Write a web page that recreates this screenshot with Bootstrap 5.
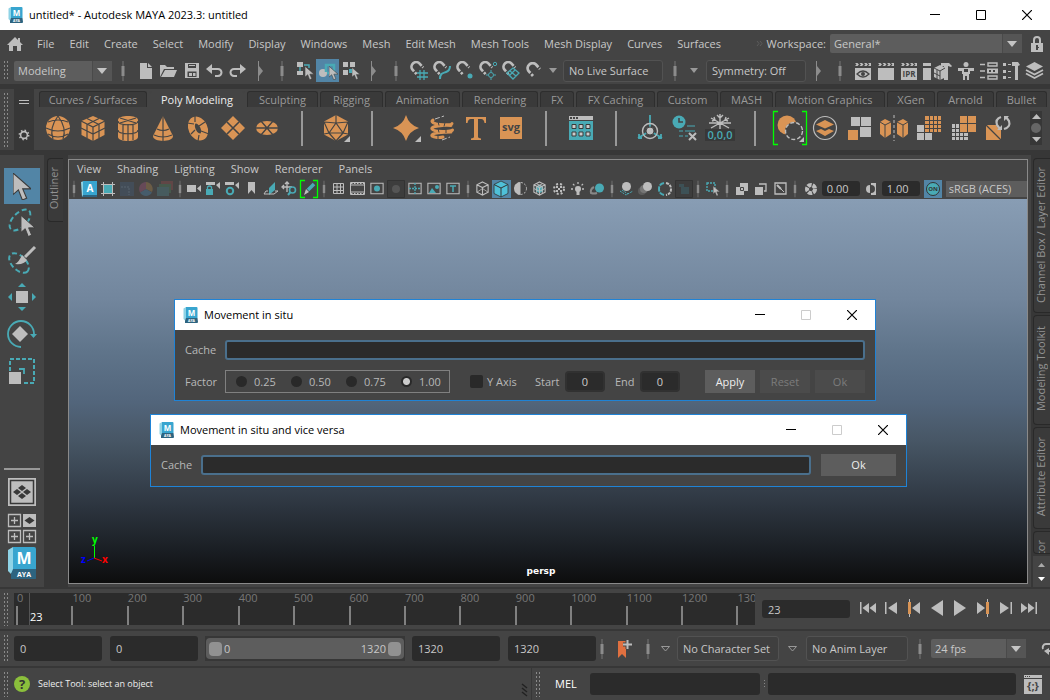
<!DOCTYPE html>
<html lang="en">
<head>
<meta charset="utf-8">
<meta name="viewport" content="width=device-width, initial-scale=1">
<title>untitled* - Autodesk MAYA 2023.3: untitled</title>
<link href="https://cdn.jsdelivr.net/npm/bootstrap@5.3.0/dist/css/bootstrap.min.css" rel="stylesheet">
<style>
:root{--panel:#444;--edge:#373737;--field:#2b2b2b;--txt:#c8c8c8;--sel:#5285a6;--ctl:#5d5d5d}
body{font-family:"Open Sans","Noto Sans",sans-serif;font-size:11px;line-height:16px;color:var(--txt);background:var(--panel)}
a{color:inherit;text-decoration:none}
button{background:none;border:0;padding:0;color:inherit;font:inherit;line-height:inherit}
input,select{font:inherit;color:inherit;border:0;min-width:0}
svg{display:block;flex:none;overflow:visible}
.fl{fill:#bdbdbd}.ft{fill:#49aab5}.fo{fill:#d99455}.fd{fill:#444}.fg{fill:#777}
.sl,.st,.so,.sd,.sg{fill:none;stroke:#bdbdbd}.st{stroke:#49aab5}.so{stroke:#d99455}.sd{stroke:#444}.sg{stroke:#888}
.wbar{height:30px;background:#fff;color:#000}
.ttl{margin-left:6px}
.wbtn{width:46px;height:30px;display:grid;place-items:center}
.wbtn:disabled{color:#ccc}
.menubar{height:27px;padding-left:7px}
.menubar nav{margin-left:-2px;gap:15px}
.lock{margin:0 2px 0 3px}
.tools{height:27px}
.grip{width:5px;margin:3px 6px 3px 3px;flex:none;background:radial-gradient(circle,#8a8a8a 0 .7px,transparent 1px) 0 0/3px 4px}
.ic{width:23px;height:23px;display:grid;place-items:center;flex:none}
.ic-h{width:22px}.ic-w{width:34px}.ic-s{width:16px}.ic-t{width:12px}.ic-l{width:27px}.ic-cut{width:9px}
.on{background:var(--sel)}
.drop{position:relative;background:var(--ctl);border-radius:2px;display:flex;flex:none;height:20px;width:98px}
.drop-ws{width:192px;height:19px}
.drop-fps{width:95px;height:19px}
.drop select{appearance:none;background:none;width:100%;padding:0 24px 0 4px;outline:0}
.drop::before{content:"";position:absolute;right:0;top:0;bottom:0;width:20px;background:#555;border-left:1px solid #4a4a4a}
.drop::after{content:"";position:absolute;right:5px;top:calc(50% - 3px);border:5px solid transparent;border-top:6px solid #c4c4c4;border-bottom:0;pointer-events:none}
.boxed{border:1px solid #525252;border-radius:3px;background:#3f3f3f;height:22px;width:100px;padding:0 5px;text-align:left;flex:none}
.boxed-l{height:25px;width:102px}
.live{margin-left:2px}
.shelf{border-top:5px solid var(--edge);height:71px;border-bottom:5px solid var(--edge)}
.shelf-side{width:20px;background:var(--edge);margin-right:5px;flex:none}
.gear{margin-top:26px}
.tabs{display:grid;gap:2px;grid-template-columns:108fr 96fr 71fr 63fr 75fr 76fr 34fr 79fr 61fr 53fr 110fr 48fr 57fr 51fr;margin-right:3px;padding-top:2px}
.tabs button{height:16px;background:#3a3a3a;border:1px solid #2e2e2e;border-bottom:0;border-radius:3px 3px 0 0;color:#999;line-height:15px;white-space:nowrap}
.tabs .cur{background:var(--panel);border-color:var(--panel);color:#eee}
.shelf-row{padding-left:2px}
.shelf-row>*{flex:1 1 0;display:grid;place-items:center;height:42px}
.shelf-scroll{width:12px;margin-left:14px;background:#373737;height:34px}
.toolbox{width:44px;padding-top:13px}
.toolbox .tl{width:36px;height:36px;margin-bottom:1px;display:grid;place-items:center}
.strip{width:24px;background:var(--edge);padding:3px 5px 0 3px}
.side{width:22px;padding:3px 0 0 5px;gap:2px;background:linear-gradient(90deg,#444 0 3px,#373737 3px)}
.side-nav{height:31px;gap:10px;background:var(--panel)}
.vtab{background:#3a3a3a;border:1px solid #292929;border-radius:4px 0 0 4px;border-right:0;color:#929292;overflow:hidden;width:100%;padding:8px 3px 0 0;display:flex;align-items:flex-start;justify-content:center;flex:none}
.vtab span{writing-mode:vertical-rl;transform:rotate(180deg);line-height:14px;white-space:nowrap}
.vt-64{height:64px}.vt-102{height:102px;padding-top:9px}.vt-110{height:110px;padding-top:10px}.vt-155{height:155px}
.vt-rest{flex:1 1 0;min-height:0}
.vp{border:1px solid #8a8a8a;margin-top:4px;margin-bottom:3px;min-width:0}
.pmenu{height:18px;padding-left:8px;gap:16px}
.ptools{height:21px}
.ptools .pi{flex:1 1 0;height:18px;display:grid;place-items:center}
.ptools .ps{width:10px;display:grid;place-items:center}
.pgap{width:22px;display:grid;place-items:center}
.num{background:var(--field);border-radius:3px;height:15px;width:38px;padding:0 5px}
.cm{width:18px;height:18px;display:grid;place-items:center}
.view-tf{appearance:none;background:var(--ctl);width:81px;height:16px;padding:0 3px}
.scene{background:linear-gradient(#889db4,#72869d 26%,#5f748a 40%,#52657b 53%,#475665 63%,#303944 78%,#191d22 92%,#0d0d0d)}
.cam{left:-7px;font-family:"DejaVu Sans",sans-serif}
.dlg{position:absolute;border:1px solid #1f83d6;background:var(--panel);color:#b8b8b8}
.dlg-a{left:105px;top:100px;width:702px}
.dlg-b{left:81px;top:215px;width:757px}
.dbody-a{padding:10px 10px 7px;gap:10px}
.dbody-b{padding:9px 10px 10px}
.cap{width:40px}.cap-s{width:30px}.cap-e{width:25px;margin-left:10px}
.cache{background:var(--field);border:2px solid #4a6f8c;border-radius:3px;height:20px;outline:0}
.radios{border:1px solid #808080;height:23px;padding-left:10px}
.radios label{width:55px;display:flex;align-items:center;gap:7px}
.radios label:last-child{width:48px}
.radios input,.tick{appearance:none;width:11px;height:11px;border-radius:50%;background:#292929;margin:0}
.radios input:checked{background:radial-gradient(circle,#ccc 0 3px,#292929 4px)}
.tick{width:13px;height:13px;border-radius:2px}
.yaxis{margin-left:20px;width:65px}
.spin{width:40px;height:21px;background:var(--field);border:2px solid #313131;border-radius:4px;text-align:center;color:#ccc}
.push{width:50px;height:23px;background:var(--ctl);color:#eee}
.push:disabled{background:#4b4b4b;color:#7c7c7c}
.push-l{width:75px;height:22px;margin-left:10px}
.g5{gap:5px}
.rule{height:2px;background:var(--edge)}
.row-time{height:40px}.row-range{height:35px}.row-status{height:32px}
.track{background:var(--field);height:32px;padding-left:2px;overflow-x:clip;overflow-y:visible;color:#777;position:relative}
.track span{flex:0 0 7.5%;padding-left:1px;line-height:15px;margin-top:-3px;background:linear-gradient(#808080,#808080) 0 16px/2px 19px no-repeat}
.now{position:absolute;left:15px;top:0;bottom:0;border-left:1px solid #555;color:#fff;padding-top:16px}
.val{background:var(--field);border-radius:3px;height:25px;width:88px;padding:0 6px;flex:none}
.val-now{height:18px;margin-left:7px}
.play{margin:0 10px 2px 6px}
.span-bar{width:200px;height:25px;background:var(--edge);padding:2px 1px;margin:0 7px;flex:none}
.span-bar>div{background:var(--ctl);border-radius:4px;height:21px;padding:0 3px;gap:2px}
.knob{width:13px;height:14px;background:#919191;border-radius:4px}
.mini{font-size:9px;color:#eee}
.help{flex:0 0 484px}
.vline{width:1px;background:var(--edge)}
.mel-cap{width:44px;padding-left:9px}
.mel{background:var(--field);height:22px;border-radius:3px;outline:0}
.mel-in{width:170px}
</style>
</head>
<body class="vh-100 d-flex flex-column overflow-hidden">
<svg width="0" height="0" class="position-absolute" aria-hidden="true"><defs>
<symbol id="maya" viewBox="0 0 28 32"><path d="M0 3 5 0V24L3 27 0 24Z" fill="#8fd3e6"/><path d="M5 0H26a2 2 0 0 1 2 2V22H5Z" fill="#38a5cf"/><path d="M5 22H28l1 8a2 2 0 0 1-2 2H3V27Z" fill="#2d6480"/><text x="16" y="17" text-anchor="middle" font-size="16" font-weight="700" fill="#fff">M</text><text x="16" y="30" text-anchor="middle" font-size="7" font-weight="700" fill="#fff">AYA</text></symbol>
<symbol id="sep" viewBox="0 0 6 22"><path class="fg" d="M2.500 1h1v20h-1z"/><path fill="#8c8c8c" d="M1.500 6h3v10h-3z"/></symbol>
<symbol id="han" viewBox="0 0 6 22"><path fill="#8c8c8c" d="M1 1h1v20H1zM2 6l4 5-4 5z"/></symbol>
<symbol id="dn" viewBox="0 0 8 5"><path d="M0 0h8L4 5z" fill="#999"/></symbol>
<symbol id="cur" viewBox="0 0 10 15"><path class="fl" stroke="#3a3a3a" stroke-width=".6" d="M0 0v12l3-2.600L5.200 15l2.400-1L5.400 8.800H10z"/></symbol>
<symbol id="mag" viewBox="0 0 18 18"><path class="sl" stroke-width="2.800" stroke-dasharray="2.500 1.500 20.500 1.500 3" d="M8 14 3.500 9A5 5 0 0 1 11 2.500L15 7"/></symbol>
<symbol id="clap" viewBox="0 0 18 18"><path class="fl" d="M1 6h16v12H1zM1 1l2.500 0 1.500 1.500-1.500 1.500H1l1.500-1.500zM5.500 1H8l1.500 1.500L8 4H5.500L7 2.500zM10 1h2.500L14 2.500 12.500 4H10l1.500-1.500zM14 1h3v3h-3l1.500-1.500z"/></symbol>
<symbol id="cube" viewBox="0 0 16 16"><path class="sl" stroke-width="1.200" d="M8 1 14 4V12L8 15 2 12V4ZM2 4l6 3 6-3M8 7v8"/></symbol>
<symbol id="frm" viewBox="0 0 16 14"><path class="sl" stroke-width="1.200" d="M1 1h14v12H1z"/></symbol>
<symbol id="wmin" viewBox="0 0 10 10"><path d="M0 4.500h10" stroke="currentColor"/></symbol>
<symbol id="wmax" viewBox="0 0 10 10"><path d="M.5.5h9v9h-9z" fill="none" stroke="currentColor"/></symbol>
<symbol id="wx" viewBox="0 0 10 10"><path d="M0 0l10 10M10 0 0 10" stroke="currentColor" stroke-width="1.200"/></symbol>
</defs></svg>

<header class="wbar d-flex align-items-center flex-shrink-0 ps-2">
  <svg width="15" height="16"><use href="#maya"/></svg><span class="ttl me-auto">untitled* - Autodesk MAYA 2023.3: untitled</span>
  <button class="wbtn" aria-label="Minimize"><svg width="10" height="10"><use href="#wmin"/></svg></button>
  <button class="wbtn" aria-label="Maximize"><svg width="10" height="10"><use href="#wmax"/></svg></button>
  <button class="wbtn" aria-label="Close"><svg width="10" height="10"><use href="#wx"/></svg></button>
</header>

<div class="menubar d-flex align-items-center flex-shrink-0">
  <svg width="16" height="14" viewBox="0 0 16 14" class="me-3"><path class="fl" d="M8 0 11 3V1h2v4l3 3h-2v6H10V9H6v5H2V8H0z"/></svg>
  <nav class="d-flex text-nowrap me-auto"><a href="#">File</a><a href="#">Edit</a><a href="#">Create</a><a href="#">Select</a><a href="#">Modify</a><a href="#">Display</a><a href="#">Windows</a><a href="#">Mesh</a><a href="#">Edit Mesh</a><a href="#">Mesh Tools</a><a href="#">Mesh Display</a><a href="#">Curves</a><a href="#">Surfaces</a></nav>
  <svg width="6" height="5" class="me-1"><path d="M0 0l2 2.500L0 5M3 0l2 2.500L3 5" fill="none" stroke="#5c5c5c"/></svg>
  <label for="ws" class="me-1">Workspace:</label>
  <div class="drop drop-ws"><select id="ws"><option>General*</option></select></div>
  <button class="ic lock" aria-label="Lock"><svg width="12" height="16" viewBox="0 0 12 16"><path class="sl" stroke-width="2" d="M3 7V4a3 3 0 0 1 6 0v3"/><path class="fl" d="M0 7h12v9H0z"/><path class="fd" d="M5 9h2v2h1v1H7v2H5z"/></svg></button>
</div>

<div class="tools d-flex align-items-center flex-shrink-0">
  <span class="grip align-self-stretch"></span>
  <div class="drop"><select aria-label="Menu set"><option>Modeling</option></select></div>
  <span class="ic ic-h"><svg width="6" height="22"><use href="#sep"/></svg></span>
  <button class="ic" aria-label="New scene"><svg width="12" height="16" viewBox="0 0 12 16"><path class="fl" d="M0 0h7v5h5v11H0zM8 0l4 4H8z"/></svg></button>
  <button class="ic" aria-label="Open"><svg width="17" height="14" viewBox="0 0 17 14"><path class="fl" d="M0 13V1h5l2 2h7v2H4zM5 6h12l-3 7H1z"/></svg></button>
  <button class="ic" aria-label="Save"><svg width="14" height="15" viewBox="0 0 14 15"><path class="fl" d="M0 0h14v15H0z"/><path class="fd" d="M3 1h8v4H3zM2.500 8.500h9V14h-9z"/><path class="fl" d="M4 2h6v1H4zM4 10h3v3H4zM8 10h2.500v3H8z"/></svg></button>
  <button class="ic" aria-label="Undo"><svg width="17" height="13" viewBox="0 0 17 13"><path class="sl" stroke-width="2" d="M3 5h9a3 3 0 0 1 0 7H9"/><path class="fl" d="M0 5l6-5v10z"/></svg></button>
  <button class="ic" aria-label="Redo"><svg width="17" height="13" viewBox="0 0 17 13"><path class="sl" stroke-width="2" d="M14 5H5a3 3 0 0 0 0 7h3"/><path class="fl" d="M17 5l-6-5v10z"/></svg></button>
  <span class="ic ic-h"><svg width="6" height="22"><use href="#han"/></svg></span>
  <span class="ic ic-h"><svg width="6" height="22"><use href="#sep"/></svg></span>
  <button class="ic" aria-label="Select by hierarchy"><svg width="18" height="18" viewBox="0 0 18 18"><path class="fl" d="M1 0h6v5H1zM1 9h6v4H1z"/><path class="st" stroke-width="1.500" d="M8 3h5v3M4 5v4"/><use href="#cur" x="9" y="4" width="9" height="14"/></svg></button>
  <button class="ic on" aria-label="Select by object"><svg width="20" height="18" viewBox="0 0 20 18"><circle class="fl" cx="5" cy="11" r="4"/><path class="st" stroke-width="2.500" d="M8 10V3h8v8H9"/><use href="#cur" x="11" y="4" width="9" height="14"/></svg></button>
  <button class="ic" aria-label="Select by component"><svg width="18" height="18" viewBox="0 0 18 18"><path class="fl" d="M1 0h5v5H1zM8 0h5v5H8zM1 8h5v5H1z"/><path class="ft" d="M7 7h5v4H7z"/><use href="#cur" x="10" y="5" width="8" height="13"/></svg></button>
  <span class="ic ic-h"><svg width="6" height="22"><use href="#han"/></svg></span>
  <span class="ic"><svg width="6" height="22"><use href="#sep"/></svg></span>
  <button class="ic" aria-label="Snap to grids"><svg width="18" height="18" viewBox="0 0 18 18"><use href="#mag" x="-1" y="-1" width="17" height="17"/><path class="st" stroke-width="1.300" d="M10 8v10M14 8v10M7 11h11M7 15h11"/></svg></button>
  <button class="ic" aria-label="Snap to curves"><svg width="18" height="18" viewBox="0 0 18 18"><use href="#mag" x="-1" y="-1" width="17" height="17"/><path class="st" stroke-width="2" d="M7 17c0-6 3-6 6-7 3-1 4-3 4-6"/></svg></button>
  <button class="ic" aria-label="Snap to points"><svg width="18" height="18" viewBox="0 0 18 18"><use href="#mag" x="-1" y="-1" width="17" height="17"/><circle class="ft" cx="14" cy="14" r="2.500"/></svg></button>
  <button class="ic" aria-label="Snap to center"><svg width="18" height="18" viewBox="0 0 18 18"><use href="#mag" x="-1" y="-1" width="17" height="17"/><circle class="st" cx="12" cy="13" r="2.500"/><circle class="st" cx="16" cy="2" r="1.700"/><path class="st" d="M12 8v2M12 16v2M7 13h2M15 13h2"/></svg></button>
  <button class="ic" aria-label="Snap to planes"><svg width="18" height="18" viewBox="0 0 18 18"><use href="#mag" x="-1" y="-1" width="17" height="17"/><path class="st" stroke-width="1.300" d="M11 6l6 5-6 6-6-6zM8 9l6 5M13 8l-6 6"/></svg></button>
  <button class="ic" aria-label="Make live"><svg width="18" height="18" viewBox="0 0 18 18"><use href="#mag" width="18" height="18"/></svg></button>
  <span class="ic ic-s"><svg width="8" height="5"><use href="#dn"/></svg></span>
  <button class="boxed live">No Live Surface</button>
  <span class="ic"><svg width="6" height="22"><use href="#sep"/></svg></span>
  <span class="ic ic-s me-1"><svg width="8" height="5"><use href="#dn"/></svg></span>
  <button class="boxed">Symmetry: Off</button>
  <span class="ic"><svg width="6" height="22"><use href="#han"/></svg></span>
  <span class="ic ic-h"><svg width="6" height="22"><use href="#sep"/></svg></span>
  <button class="ic" aria-label="Render view"><svg width="18" height="18"><use href="#clap"/><path fill="none" stroke="#444" stroke-width="1.300" d="M3 12q6-6 12 0-6 6-12 0z"/><circle class="fd" cx="9" cy="12" r="2"/></svg></button>
  <button class="ic" aria-label="Render"><svg width="18" height="18"><use href="#clap"/></svg></button>
  <button class="ic" aria-label="IPR render"><svg width="18" height="18"><use href="#clap"/><text x="9" y="15" text-anchor="middle" font-size="8" font-weight="700" class="fd">IPR</text></svg></button>
  <button class="ic ic-w" aria-label="Render setup"><svg width="29" height="18" viewBox="0 0 29 18"><path class="fl" d="M0 1h8v3H0zM0 6h8v12H0zM11 6l6-3 6 3v9l-6 3-6-3zM18 1h8l3 3-1 1-3-1v14h-4V4h-3z"/><path class="sd" d="M9.500 5v13M11 6l6 3 5-3M17 9v9M14 8v9M11 11l6 3"/></svg></button>
  <button class="ic" aria-label="Character controls"><svg width="16" height="18" viewBox="0 0 16 18"><circle class="fl" cx="8" cy="2.500" r="2.500"/><path class="fl" d="M0 6h16v3h-4v3h-1v6H9v-4H7v4H5v-6H4V9H0z"/><path class="fd" d="M6 7h4v3H6z"/></svg></button>
  <button class="ic" aria-label="Node editor"><svg width="18" height="18" viewBox="0 0 18 18"><path class="sl" stroke-width="1.400" d="M8 1h9v3H8zM8 14h9v3H8zM0 2.500h5M0 15.500h5M0 9h5"/><path class="fl" d="M7 6.500h11v5H7z"/><path class="fd" d="M9 8h2v2H9zM13 8h2v2h-2z"/></svg></button>
  <button class="ic" aria-label="Tool settings"><svg width="17" height="18" viewBox="0 0 17 18"><path class="fl" d="M0 1h3v3H0zM0 8h3v3H0zM0 14h3v3H0zM5 2h3v1H5zM5 9h3v1H5zM5 15h3v1H5zM9 0h6l2 3-2 1v14h-3V4H9z"/></svg></button>
  <button class="ic" aria-label="Channel layers"><svg width="17" height="17" viewBox="0 0 17 17"><path class="fl" d="M8.500 0 17 4.500 8.500 9 0 4.500z"/><path class="sl" stroke-width="1.800" d="M0 8l8.500 4.500L17 8M0 11.500 8.500 16 17 11.500"/></svg></button>
</div>

<section class="shelf d-flex flex-shrink-0">
  <span class="grip"></span>
  <div class="shelf-side d-flex flex-column align-items-center">
    <svg width="10" height="6" class="mt-2"><path class="fl" d="M0 3h10v1H0zM0 6h10v1H0z"/></svg>
    <svg width="12" height="12" class="gear" viewBox="0 0 12 12"><circle class="sl" stroke-width="1.600" cx="6" cy="6" r="3.400"/><circle class="sl" stroke-width="1.500" cx="6" cy="6" r="4.700" stroke-dasharray="1.500 2.190"/></svg>
  </div>
  <div class="flex-grow-1 d-flex flex-column">
    <div class="tabs"><button>Curves / Surfaces</button><button class="cur">Poly Modeling</button><button>Sculpting</button><button>Rigging</button><button>Animation</button><button>Rendering</button><button>FX</button><button>FX Caching</button><button>Custom</button><button>MASH</button><button>Motion Graphics</button><button>XGen</button><button>Arnold</button><button>Bullet</button></div>
    <div class="d-flex">
    <div class="shelf-row d-flex flex-grow-1">
      <button aria-label="Sphere"><svg width="24" height="24" viewBox="0 0 24 24"><circle class="fo" cx="12" cy="12" r="12"/><path class="sd" stroke-width="1.200" d="M2 6q10-4 20 0M0 12q12 6 24 0M2 18q10 6 20 0M12 0Q3 12 7 23M12 0q9 12 5 23"/></svg></button>
      <button aria-label="Cube"><svg width="24" height="25" viewBox="0 0 24 25"><path class="fo" d="M12 0 23.500 5V19L12 25 .5 19V5z"/><path class="sd" stroke-width="1.200" d="M0 5l12 6 12-6M12 11v14M6 8v14M18 8v14M0 12l12 6 12-6M6 2.500l12 6M18 2.500l-12 6"/></svg></button>
      <button aria-label="Cylinder"><svg width="20" height="25" viewBox="0 0 20 25"><path class="fo" d="M0 4C0-1.300 20-1.300 20 4V21C20 26.300 0 26.300 0 21z"/><path class="sd" stroke-width="1.200" d="M0 5c0 5 20 5 20 0M0 14c0 5 20 5 20 0M10 8v17M5 8v16M15 8v16M2 2l16 5M18 2 2 7"/></svg></button>
      <button aria-label="Cone"><svg width="20" height="25" viewBox="0 0 20 25"><path class="fo" d="M10 0 20 20C20 26.500 0 26.500 0 20z"/><path class="sd" stroke-width="1.200" d="M4 13q6 3 12 0M1 19q9 4 18 0M10 0v25"/></svg></button>
      <button aria-label="Torus"><svg width="22" height="25" viewBox="0 0 22 25"><ellipse class="so" stroke-width="7" cx="11" cy="12.500" rx="6" ry="9" transform="rotate(-25 11 12.500)"/><path class="sd" stroke-width="1.200" d="M0 7l7 1M8 0v6M18 6l-6 4M14 15l8 3M12 19l-1 6M4 18l4-4"/></svg></button>
      <button aria-label="Plane"><svg width="24" height="24" viewBox="0 0 24 24"><path class="fo" d="M12 0l12 12-12 12L0 12z"/><path class="sd" stroke-width="1.600" d="M6 6l12 12M18 6 6 18"/></svg></button>
      <button aria-label="Disc"><svg width="22" height="14" viewBox="0 0 22 14"><ellipse class="fo" cx="11" cy="7" rx="11" ry="7"/><path class="sd" stroke-width="1.400" d="M0 7h22M5 0l12 14M17 0 5 14"/></svg></button>
      <span><svg width="2" height="35"><path fill="#999" d="M0 0h2v35H0z"/></svg></span>
      <button aria-label="Platonic"><svg width="26" height="27" viewBox="0 0 26 27"><path class="fo" d="M12 0l12 6.500v13L12 26 0 19.500v-13z"/><path class="sd" stroke-width="1.200" d="M12 0v8M5 18l7-10 7 10zM0 7l12 1 12-1M0 7l5 11-5 1M24 7l-5 11 5 1M5 18l7 8 7-8"/><path class="fl" d="M26 21v6h-6z"/></svg></button>
      <span><svg width="2" height="35"><path fill="#999" d="M0 0h2v35H0z"/></svg></span>
      <button aria-label="Super shape"><svg width="28" height="27" viewBox="0 0 28 27"><path class="fo" d="M13 0q3 10 13 13-10 3-13 13Q10 16 0 13 10 10 13 0z"/><path class="fl" d="M28 21v6h-6z"/></svg></button>
      <button aria-label="Helix"><svg width="24" height="25" viewBox="0 0 24 25"><path class="so" stroke-width="3" stroke-linecap="round" d="M3 4C0 6 4 8 10 8.500s12 .5 12-1M21 9.500C14 9 0 10 2 13S21 16 22.500 14M21 16C14 16 0 17 2 20c2 1.500 8 2 11 1"/><path class="sl" stroke-dasharray="5 2" d="M5 3 14 0M12 24l8-3"/><path class="sd" d="M8 5.500l1 4M15 6.500l-1 4M8 12.500l1 4M16 13l0 4M8 19l0 4"/></svg></button>
      <button aria-label="Type"><svg width="20" height="23" viewBox="0 0 20 23"><path class="fo" d="M0 0h20v6h-1.500Q18 2 15 2H12V20q0 1 3 1.500V23H5v-1.500Q8 21 8 20V2H5Q2 2 1.500 6H0z"/></svg></button>
      <button aria-label="SVG"><svg width="22" height="22"><path class="fo" d="M0 0h22v22H0z"/><text x="11" y="14" text-anchor="middle" font-size="11" font-weight="700" class="fd">svg</text></svg></button>
      <span><svg width="2" height="35"><path fill="#999" d="M0 0h2v35H0z"/></svg></span>
      <button aria-label="Modeling toolkit"><svg width="24" height="24" viewBox="0 0 24 24"><path class="fl" d="M0 0h24v4H0z"/><path class="fd" d="M1 1h2v2H1zM4 1h2v2H4zM7 1h2v2H7z"/><path class="ft" d="M0 5h24v19H0z"/><path d="M3 8.500h4v4H3zM10 8.500h4v4h-4zM17 8.500h4v4h-4zM3 16h4v4H3zM10 16h4v4h-4zM17 16h4v4h-4z" fill="#ccc" stroke="#3a3a3a"/></svg></button>
      <span><svg width="2" height="35"><path fill="#999" d="M0 0h2v35H0z"/></svg></span>
      <button aria-label="Center pivot"><svg width="24" height="26" viewBox="0 0 24 26"><path class="st" stroke-width="1.800" d="M12 0v12M12 16l-12 7M12 16l12 7M1 19v4h3M23 19v4h-3"/><circle class="sl" stroke-width="1.400" cx="12" cy="16" r="7.500"/><circle class="fl" stroke="#444" cx="12" cy="16" r="4"/></svg></button>
      <button aria-label="Delete history"><svg width="26" height="26" viewBox="0 0 26 26"><circle class="ft" cx="7" cy="7" r="6.500"/><path class="sd" stroke-width="1.600" d="M7 3v4h4"/><path class="st" stroke-width="1.200" d="M15 11h8M7 16h4M13 16h10M7 21h4M13 21h3"/><path class="sl" stroke-width="2" d="M17 18l7 7M24 18l-7 7"/></svg></button>
      <button aria-label="Freeze transformations"><svg width="28" height="28" viewBox="0 0 28 28"><path class="sl" stroke-width="1.400" d="M14 0v16M5 4l18 10M23 4 5 14M3 9h22M11 1l3 3 3-3M6 7l3-1-1-3M22 7l-3-1 1-3"/><path fill="#383838" d="M-1 15h30v12H-1z"/><text x="14" y="25" text-anchor="middle" font-size="11" font-weight="600" class="ft">0,0,0</text></svg></button>
      <span><svg width="2" height="35"><path fill="#999" d="M0 0h2v35H0z"/></svg></span>
      <button aria-label="Combine"><svg width="34" height="34" viewBox="0 0 34 34"><path fill="none" stroke="#0f0" stroke-width="1.300" d="M5 .5H.5v33H5M29 .5h4.500v33H29"/><circle class="fo" cx="14" cy="14" r="9.500"/><circle class="fd" cx="21" cy="20" r="9"/><circle class="sl" stroke-width="1.400" stroke-dasharray="4 2" cx="21" cy="20" r="8.500"/><path class="fl" d="M31 26v5h-5z"/></svg></button>
      <button aria-label="Separate"><svg width="24" height="24" viewBox="0 0 24 24"><circle class="sl" stroke-width="1.200" cx="12" cy="12" r="11.500"/><path class="fo" d="M12 4l9 4.500-9 4-9-4zM3 15l5-2 4 2 4-2 5 2-9 5z"/></svg></button>
      <button aria-label="Extract"><svg width="23" height="23" viewBox="0 0 23 23"><path class="fl" d="M3 0h9v9H3zM13 0h10v9H13zM12 10h11v10H12z"/><path class="fo" d="M0 13h10v10H0z"/></svg></button>
      <button aria-label="Mirror"><svg width="28" height="26" viewBox="0 0 28 26"><path class="fo" d="M0 7l5-3 6 3v12l-6 4-5-4zM28 7l-5-3-6 3v12l6 4 5-4z"/><path class="sd" d="M0 7l5 3 6-3M5 10v13M28 7l-5 3-6-3M23 10v13"/><path class="sl" stroke-dasharray="3 2" d="M14 0v26"/></svg></button>
      <button aria-label="Smooth"><svg width="24" height="24" viewBox="0 0 24 24"><path class="fo" d="M8 0h16v16H8z"/><path class="sd" d="M12.500 0v16M16.500 0v16M20.500 0v16M8 4.500h16M8 8.500h16M8 12.500h16"/><path class="fl" d="M0 9h7v7H0zM0 17h7v7H0zM8 17h7v7H8z"/></svg></button>
      <button aria-label="Reduce"><svg width="24" height="24" viewBox="0 0 24 24"><path class="fo" d="M8 0h7v7H8zM16 0h8v7h-8zM8 8h7v8H8zM16 8h8v8h-8z"/><path class="fl" d="M0 8h7v9h9v7H0z"/><path class="sd" d="M3.500 8v16M7.500 8v16M11.500 16v8M0 12.500h8M0 16.500h16M0 20.500h16"/></svg></button>
      <button aria-label="Remesh"><svg width="25" height="24" viewBox="0 0 25 24"><path class="fo" d="M0 9h15v15H0z"/><path class="sd" stroke-width="1.300" d="M0 9l15 15"/><circle class="fd" cx="17" cy="7" r="7"/><path class="sl" stroke-width="2.200" d="M15 1q-6 2-4 8l3 4M18 13q7-2 5-8l-3-4"/><path class="fl" d="M11 14h5V9zM23 0h-5v5z"/></svg></button>
    </div>
    <div class="shelf-scroll d-flex flex-column align-items-center justify-content-center gap-1 my-1 me-2"><svg width="9" height="5"><path d="M0 5h9L4.500 0z" class="fl"/></svg><svg width="10" height="10"><circle cx="5" cy="5" r="5" fill="#666"/></svg><svg width="9" height="5"><path d="M0 0h9L4.500 5z" class="fl"/></svg></div>
    </div>
  </div>
</section>

<main class="d-flex flex-grow-1 overflow-hidden">
  <aside class="toolbox d-flex flex-column align-items-center flex-shrink-0">
    <button class="tl on" aria-label="Select tool"><svg width="18" height="27"><use href="#cur" width="18" height="27"/></svg></button>
    <button class="tl" aria-label="Lasso tool"><svg width="28" height="28" viewBox="0 0 28 28"><ellipse class="st" stroke-width="2" stroke-dasharray="5 3" cx="12" cy="11" rx="13" ry="7" transform="rotate(-45 12 11)"/><use href="#cur" x="13" y="6" width="14" height="22"/></svg></button>
    <button class="tl" aria-label="Paint selection"><svg width="28" height="28" viewBox="0 0 28 28"><ellipse class="st" stroke-width="2" stroke-dasharray="5 3" cx="11" cy="17" rx="12" ry="7" transform="rotate(45 11 17)"/><path class="sl" stroke-width="3" d="M27 1 17 11"/><path class="fl" d="M14 9l5 5q-3 5-12 4 4-2 7-9z"/></svg></button>
    <button class="tl" aria-label="Move tool"><svg width="28" height="28" viewBox="0 0 28 28"><path class="fl" d="M8 8h12v12H8z"/><path class="ft" d="M10 4h8l-4-4zM10 24h8l-4 4zM4 10v8l-4-4zM24 10v8l4-4z"/></svg></button>
    <button class="tl" aria-label="Rotate tool"><svg width="30" height="28" viewBox="0 0 30 28"><path class="st" stroke-width="1.800" d="M14 27A13 13 0 1 1 27 14"/><path class="ft" d="M23 14h7l-3.500 4z"/><path class="fl" d="M13 6l8 8-8 8-8-8z"/></svg></button>
    <button class="tl" aria-label="Scale tool"><svg width="26" height="26" viewBox="0 0 26 26"><path class="st" stroke-width="2" stroke-dasharray="4 2" d="M1 1h24v24H1z"/><path class="fd" d="M0 13h13v13H0z"/><path class="fl" d="M0 14h12v12H0z"/><path class="st" stroke-width="1.800" d="M10 11h5v5"/></svg></button>
    <svg width="36" height="2" class="mt-auto mb-2"><path fill="#999" d="M0 0h36v2H0z"/></svg>
    <button class="mb-2" aria-label="Single view"><svg width="28" height="28" viewBox="0 0 28 28"><path class="fl" d="M0 0h28v28H0z"/><path fill="none" stroke="#383838" stroke-width="1.500" d="M2.500 2.500h23v23h-23z"/><path fill="#383838" d="M14 7l4 3-4 3-4-3zM9 11l4 3-4 3-4-3zM19 11l4 3-4 3-4-3zM14 15l4 3-4 3-4-3z"/></svg></button>
    <button class="mb-1" aria-label="Four views"><svg width="28" height="29" viewBox="0 0 28 29"><path class="sl" stroke-width="1.300" d="M.5.5h12v12H.5zM.5 16.500h12v12H.5zM15.500 16.500h12v12h-12zM6.500 3v7M3 6.500h7M6.500 19v7M3 22.500h7M21.500 19v7M18 22.500h7"/><path class="fl" d="M15 0h13v13H15z"/><path fill="#383838" d="M21.500 3l5 3.500-5 3.500-5-3.500z"/></svg></button>
    <svg width="28" height="32" class="mb-2"><use href="#maya"/></svg>
  </aside>
  <div class="strip flex-shrink-0"><button class="vtab vt-64"><span>Outliner</span></button></div>
  <section class="vp flex-grow-1 d-flex flex-column">
    <nav class="pmenu d-flex align-items-center"><a href="#">View</a><a href="#">Shading</a><a href="#">Lighting</a><a href="#">Show</a><a href="#">Renderer</a><a href="#">Panels</a></nav>
    <div class="ptools d-flex align-items-center">
      <span class="ps"><svg width="6" height="18"><use href="#sep"/></svg></span>
      <button class="pi" aria-label="Arnold view"><svg width="16" height="16"><path fill="#8fd3e6" d="M0 1l3-1v16H1z"/><path fill="#38a5cf" d="M2 0h14v14H2z"/><path fill="#2d6480" d="M2 14h14v2H1z"/><text x="9" y="11" text-anchor="middle" font-size="10" font-weight="700" fill="#fff">A</text></svg></button>
      <button class="pi" aria-label="Frame region"><svg width="14" height="14" viewBox="0 0 14 14"><path class="ft" d="M3 3h8v8H3z"/><path class="sl" d="M2.500 0v14M11.500 0v14M0 2.500h14M0 11.500h14"/></svg></button>
      <button class="pi" aria-label="Crop region"><svg width="14" height="14"><path d="M0 0h14v14H0z" fill="#434d58"/><path d="M1 5h8v8" fill="none" stroke="#59646f" stroke-dasharray="2 1"/></svg></button>
      <button class="pi" aria-label="Colour"><svg width="14" height="14" viewBox="0 0 14 14" opacity=".35"><path d="M7 7V0a7 7 0 0 1 6 10z" fill="#b58a4a"/><path d="M7 7l6 3.500A7 7 0 0 1 1 10.500z" fill="#4a8ab5"/><path d="M7 7 1 10.500A7 7 0 0 1 7 0z" fill="#a5557f"/></svg></button>
      <button class="pi" aria-label="Snapshots"><svg width="16" height="15" viewBox="0 0 16 15" opacity=".4"><path d="M4 0h12v9H4z" fill="#8a4a4a"/><path d="M2 3h12v9H2z" fill="#4a7a5a"/><path d="M0 6h12v9H0z" fill="#4d7f87"/></svg></button>
      <span class="ps"><svg width="6" height="18"><use href="#sep"/></svg></span>
      <button class="pi" aria-label="Camera"><svg width="14" height="10"><path class="fl" d="M0 1h9v7H0zM10 4.500 14 1v7z"/></svg></button>
      <button class="pi" aria-label="Lock camera"><svg width="15" height="14"><path class="fl" d="M0 0h9v3H0zM10 3l4-3v7z"/><path class="ft" d="M0 7h7v6H0z"/><path class="st" stroke-width="1.300" d="M1.500 7V5q2-2 4 0v2"/></svg></button>
      <button class="pi" aria-label="Camera attributes"><svg width="15" height="14"><path class="fl" d="M0 0h9v3H0zM10 3l4-3v7z"/><circle class="st" stroke-width="2" cx="5" cy="9" r="3.200"/></svg></button>
      <button class="pi" aria-label="Bookmarks"><svg width="7" height="13"><path class="fl" d="M0 0h7v12L3.500 8 0 12z"/></svg></button>
      <button class="pi" aria-label="Image plane"><svg width="14" height="13"><path class="ft" d="M5 6l6-6v8l-6 5z"/><path class="sl" d="M4 9H2l-2 3h10l4-3h-3"/></svg></button>
      <button class="pi" aria-label="Pan and zoom"><svg width="15" height="14"><path class="sl" stroke-width="1.300" d="M5 1v9M1 5h9M3 2l2-2 2 2M2 3 0 5l2 2"/><circle class="st" stroke-width="1.600" cx="10.500" cy="8" r="3"/><path class="st" stroke-width="2" d="M8.500 10 6 13"/></svg></button>
      <button class="pi" aria-label="Grease pencil"><svg width="18" height="18"><path fill="none" stroke="#0f0" stroke-width="1.300" d="M5 .5H.5v17H5M13 .5h4.500v17H13"/><path class="st" stroke-width="3.500" d="M14 4 8 10"/><path class="fl" d="M6 9l3 3-5 3z"/></svg></button>
      <span class="ps"><svg width="6" height="18"><use href="#sep"/></svg></span>
      <button class="pi" aria-label="Grid"><svg width="11" height="11"><path class="sl" d="M.5.5h10v10H.5zM4 0v11M7.500 0v11M0 4h11M0 7.500h11"/></svg></button>
      <button class="pi" aria-label="Film gate"><svg width="15" height="13"><path class="sl" d="M.5.5h14v12H.5zM1 3h13M1 10h13" /><path class="sl" stroke-dasharray="1.500 1.500" d="M1 1.500h13M1 11.500h13"/></svg></button>
      <button class="pi" aria-label="Resolution gate"><svg width="14" height="13"><use href="#frm" width="14" height="13"/><circle class="ft" cx="7" cy="6.500" r="3"/></svg></button>
      <button class="pi" aria-label="Gate mask"><svg width="18" height="18"><path d="M.5.5h17v17H.5z" fill="#3d3d3d" stroke="#333"/><circle cx="9" cy="9" r="4" fill="#555"/></svg></button>
      <button class="pi" aria-label="Field chart"><svg width="14" height="13"><use href="#frm" width="14" height="13"/><path class="st" stroke-width="1.300" stroke-dasharray="2 1" d="M7 1v11M1 6.500h12"/></svg></button>
      <button class="pi" aria-label="Safe action"><svg width="14" height="13"><use href="#frm" width="14" height="13"/><circle class="ft" cx="10" cy="5" r="2"/><path class="ft" d="M2 11l3-5 4 5z"/></svg></button>
      <button class="pi" aria-label="Safe title"><svg width="14" height="13"><use href="#frm" width="14" height="13"/><path class="st" stroke-width="1.500" d="M4 4h6M7 4v6"/></svg></button>
      <span class="ps"><svg width="6" height="18"><use href="#sep"/></svg></span>
      <button class="pi" aria-label="Wireframe"><svg width="15" height="15" viewBox="0 0 16 16"><use href="#cube"/><path class="sl" stroke-width=".8" d="M2 12l6-4 6 4"/></svg></button>
      <button class="pi on" aria-label="Smooth shade"><svg width="16" height="16" viewBox="0 0 16 16"><path fill="#4fc0d8" stroke="#333" stroke-width=".8" d="M8 0l7 3.500v9L8 16l-7-3.500v-9z"/><path d="M1 3.500 8 7l7-3.500M8 7v9" fill="none" stroke="#333"/></svg></button>
      <button class="pi" aria-label="Default material"><svg width="13" height="13"><circle cx="6.500" cy="6.500" r="6" fill="none" stroke="#bdbdbd" stroke-dasharray="2 1.500"/><path class="fl" d="M6.500 0v13a6.500 6.500 0 0 1 0-13z"/></svg></button>
      <button class="pi" aria-label="Wireframe on shaded"><svg width="15" height="15" viewBox="0 0 16 16"><path class="ft" d="M8 4l4 2v5l-4 2-4-2V6z"/><use href="#cube"/><path class="sl" d="M5 3l6 3v7M11 3 5 6v7M2 8l6 3 6-3"/></svg></button>
      <button class="pi" aria-label="Textured"><svg width="12" height="12"><circle cx="6" cy="6" r="5" fill="none" stroke="#bdbdbd" stroke-width="2" stroke-dasharray="2 2"/><path class="fl" d="M3 3h2v2H3zM7 3h2v2H7zM5 5h2v2H5zM3 7h2v2H3zM7 7h2v2H7z"/></svg></button>
      <button class="pi" aria-label="Use all lights"><svg width="14" height="14"><circle class="fl" cx="7" cy="7" r="3"/><path class="fl" d="M5.500 9h3v4h-3z"/><path class="sl" stroke-dasharray="2 2" stroke-width="1.300" d="M7 0v3M0 7h3M11 7h3M2 2l3 3M12 2 9 5"/></svg></button>
      <button class="pi" aria-label="Shadows"><svg width="14" height="12"><circle class="ft" cx="9.500" cy="5" r="4.500"/><path class="sg" stroke-width="2" d="M4 4Q0 6 1 10q3 1 6 0"/></svg></button>
      <span class="ps"><svg width="6" height="18"><use href="#sep"/></svg></span>
      <button class="pi" aria-label="Ambient occlusion"><svg width="13" height="14"><circle class="fl" cx="6.500" cy="4.500" r="4.500"/><path class="st" stroke-dasharray="2 1" d="M0 9l6 4 7-4M2 8l6 4"/></svg></button>
      <button class="pi" aria-label="Motion blur"><svg width="14" height="13"><circle cx="4" cy="9" r="4" fill="#5c5c5c"/><circle cx="6" cy="7" r="4" fill="#777"/><circle class="fl" cx="9.500" cy="4.500" r="4.500"/></svg></button>
      <button class="pi" aria-label="Anti-aliasing"><svg width="14" height="14"><path class="st" stroke-width="2" stroke-dasharray="5 1" d="M6 1Q1 2 1 7t5 6"/><path class="sl" stroke-width="2" stroke-dasharray="3 1" d="M8 1q5 1 5 6t-5 6"/></svg></button>
      <button class="pi" aria-label="Depth of field"><svg width="18" height="18"><path d="M.5.5h17v17H.5z" fill="#3d3d3d" stroke="#333"/><path fill="#3d5156" d="M6 7h8v7H6zM4 4h5v3H4z"/></svg></button>
      <span class="ps"><svg width="6" height="18"><use href="#sep"/></svg></span>
      <button class="pi" aria-label="Isolate select"><svg width="14" height="14"><path class="st" stroke-width="1.400" stroke-dasharray="2 1" d="M1 1h8v8H1z"/><use href="#cur" x="7" y="4" width="7" height="10"/></svg></button>
      <span class="ps"><svg width="6" height="18"><use href="#sep"/></svg></span>
      <button class="pi" aria-label="X-ray"><svg width="12" height="12"><path class="fl" d="M4 0h8v8H4z"/><path class="fl" d="M0 4h8v8H0z"/><path class="sd" d="M4.500 4.500h3v3h-3z"/></svg></button>
      <button class="pi" aria-label="X-ray joints"><svg width="12" height="12"><path class="sl" stroke-width="1.300" d="M4 1h7v7H9"/><path class="fl" d="M0 4h8v8H0z"/></svg></button>
      <button class="pi" aria-label="X-ray active"><svg width="13" height="13"><path class="sl" stroke-width="1.300" d="M1 1h11v11H1z"/><path class="sl" stroke-width="2" d="M3 3l4 4"/><path class="sl" d="M7 7l3 3"/></svg></button>
      <span class="ps"><svg width="6" height="18"><use href="#sep"/></svg></span>
      <span class="pgap"><svg width="12" height="12"><circle class="sl" stroke-width="4" stroke-dasharray="4 1" cx="6" cy="6" r="4"/></svg></span>
      <input class="num" aria-label="Exposure" value="0.00">
      <span class="pgap"><svg width="10" height="12"><path class="fl" d="M4 2v8a4 4 0 0 1 0-8zM5 0h5v12H5v-2a4 4 0 0 0 0-8z"/></svg></span>
      <input class="num me-1" aria-label="Gamma" value="1.00">
      <button class="cm on me-1" aria-label="Colour management"><svg width="14" height="14"><circle cx="7" cy="7" r="6.500" fill="#49aab5" stroke="#333"/><text x="7" y="9" text-anchor="middle" font-size="6" font-weight="700" fill="#333">ON</text></svg></button>
      <select class="view-tf" aria-label="View transform"><option>sRGB (ACES)</option></select>
    </div>
    <div class="scene flex-grow-1 position-relative">
      <svg width="28" height="28" viewBox="0 0 28 28" class="position-absolute bottom-0 start-0 mb-3 ms-2" font-size="10" font-weight="700"><path d="M17.500 19V7" stroke="#0f0"/><path d="M17 19l8 3" stroke="#f00"/><path d="M17 19l-7 3" stroke="#00f"/><text x="15" y="4" fill="#0f0">y</text><text x="25" y="24" fill="#f00">x</text><text x="4" y="24" fill="#00f">z</text></svg>
      <b class="cam position-absolute bottom-0 w-100 text-center text-white mini mb-1">persp</b>

      <form class="dlg dlg-a">
        <div class="wbar d-flex align-items-center ps-2"><svg width="15" height="16"><use href="#maya"/></svg><span class="ttl me-auto">Movement in situ</span>
          <button type="button" class="wbtn" aria-label="Minimize"><svg width="10" height="10"><use href="#wmin"/></svg></button><button type="button" class="wbtn" aria-label="Maximize" disabled><svg width="10" height="10"><use href="#wmax"/></svg></button><button type="button" class="wbtn" aria-label="Close"><svg width="10" height="10"><use href="#wx"/></svg></button></div>
        <div class="dbody-a d-flex flex-column">
          <div class="d-flex align-items-center"><label for="ca" class="cap">Cache</label><input id="ca" class="cache flex-grow-1"></div>
          <div class="d-flex align-items-center">
            <span class="cap">Factor</span>
            <div class="radios d-flex"><label><input type="radio" name="f">0.25</label><label><input type="radio" name="f">0.50</label><label><input type="radio" name="f">0.75</label><label><input type="radio" name="f" checked>1.00</label></div>
            <label class="yaxis d-flex align-items-center gap-1"><input type="checkbox" class="tick">Y Axis</label>
            <label for="s0" class="cap-s">Start</label><input id="s0" class="spin" value="0">
            <label for="e0" class="cap-e">End</label><input id="e0" class="spin" value="0">
            <div class="g5 d-flex ms-auto"><button type="button" class="push">Apply</button><button type="button" class="push" disabled>Reset</button><button type="button" class="push" disabled>Ok</button></div>
          </div>
        </div>
      </form>

      <form class="dlg dlg-b">
        <div class="wbar d-flex align-items-center ps-2"><svg width="15" height="16"><use href="#maya"/></svg><span class="ttl me-auto">Movement in situ and vice versa</span>
          <button type="button" class="wbtn" aria-label="Minimize"><svg width="10" height="10"><use href="#wmin"/></svg></button><button type="button" class="wbtn" aria-label="Maximize" disabled><svg width="10" height="10"><use href="#wmax"/></svg></button><button type="button" class="wbtn" aria-label="Close"><svg width="10" height="10"><use href="#wx"/></svg></button></div>
        <div class="dbody-b d-flex align-items-center"><label for="cb" class="cap">Cache</label><input id="cb" class="cache flex-grow-1"><button type="button" class="push push-l">Ok</button></div>
      </form>
    </div>
  </section>
  <aside class="side d-flex flex-column flex-shrink-0">
    <button class="vtab vt-155"><span>Channel Box / Layer Editor</span></button>
    <button class="vtab vt-110"><span>Modeling Toolkit</span></button>
    <button class="vtab vt-102"><span>Attribute Editor</span></button>
    <button class="vtab vt-rest"><span>tor</span></button>
    <div class="side-nav d-flex flex-column align-items-center justify-content-center"><svg width="7" height="4"><path d="M0 4h7L3.500 0z" fill="#aaa"/></svg><svg width="7" height="4"><path d="M0 0h7L3.500 4z" fill="#fff"/></svg></div>
  </aside>
</main>

<div class="rule flex-shrink-0"></div>
<div class="row-time d-flex align-items-center flex-shrink-0">
  <span class="grip align-self-stretch"></span>
  <div class="track d-flex flex-grow-1"><span>0</span><span>100</span><span>200</span><span>300</span><span>400</span><span>500</span><span>600</span><span>700</span><span>800</span><span>900</span><span>1000</span><span>1100</span><span>1200</span><span>1300</span><div class="now">23</div></div>
  <input class="val val-now" aria-label="Current frame" value="23">
  <div class="play d-flex">
    <button class="ic" aria-label="Go to start"><svg width="16" height="12"><path class="fl" d="M0 0h1.500v12H0zM9 1v10L2.500 6zM16 1v10L9.500 6z"/></svg></button>
    <button class="ic" aria-label="Step back frame"><svg width="12" height="12"><path class="fl" d="M0 0h1.500v12H0zM12 0v12L3 6z"/></svg></button>
    <button class="ic" aria-label="Step back key"><svg width="14" height="18"><path class="fo" d="M1 3h3v12H1z"/><path class="fl" d="M2 0h1v3H2zM2 15h1v3H2zM13 3v12L5 9z"/></svg></button>
    <button class="ic" aria-label="Play backwards"><svg width="12" height="16"><path class="fl" d="M12 0v16L0 8z"/></svg></button>
    <button class="ic" aria-label="Play forwards"><svg width="12" height="16"><path class="fl" d="M0 0v16l12-8z"/></svg></button>
    <button class="ic" aria-label="Step forward key"><svg width="14" height="18"><path class="fo" d="M10 3h3v12h-3z"/><path class="fl" d="M11 0h1v3h-1zM11 15h1v3h-1zM1 3v12l8-6z"/></svg></button>
    <button class="ic" aria-label="Step forward frame"><svg width="12" height="12"><path class="fl" d="M10.500 0H12v12h-1.500zM0 0v12l9-6z"/></svg></button>
    <button class="ic" aria-label="Go to end"><svg width="16" height="12"><path class="fl" d="M14.500 0H16v12h-1.500zM0 1v10l6.500-5zM7 1v10l6.500-5z"/></svg></button>
  </div>
</div>
<div class="rule flex-shrink-0"></div>
<div class="row-range d-flex align-items-center flex-shrink-0">
  <span class="grip align-self-stretch"></span>
  <input class="val me-2" aria-label="Animation start" value="0">
  <input class="val" aria-label="Playback start" value="0">
  <div class="span-bar"><div class="d-flex align-items-center"><span class="knob"></span><span class="me-auto">0</span><span>1320</span><span class="knob"></span></div></div>
  <input class="val me-2" aria-label="Playback end" value="1320">
  <input class="val" aria-label="Animation end" value="1320">
  <span class="ic ic-t"><svg width="6" height="22"><use href="#sep"/></svg></span>
  <button class="ic ic-w" aria-label="Bookmark"><svg width="14" height="18"><path fill="#e07040" d="M0 1h8v17l-4-4-4 4z"/><path class="sd" stroke-width="4" d="M9.500 0v9M5 4.500h9"/><path class="sl" stroke-width="2" d="M9.500 0v9M5 4.500h9"/></svg></button>
  <span class="ic ic-t"><svg width="6" height="22"><use href="#sep"/></svg></span>
  <span class="ic"><svg width="9" height="6"><path d="M.5.5h8L4.500 5z" fill="none" stroke="#999"/></svg></span>
  <button class="boxed boxed-l">No Character Set</button>
  <span class="ic ic-l"><svg width="9" height="6"><path d="M.5.5h8L4.500 5z" fill="none" stroke="#999"/></svg></span>
  <button class="boxed boxed-l">No Anim Layer</button>
  <span class="ic"><svg width="6" height="22"><use href="#sep"/></svg></span>
  <div class="drop drop-fps"><select aria-label="Frame rate"><option>24 fps</option></select></div>
  <button class="ic ic-cut ms-auto" aria-label="Loop"><svg width="9" height="12"><path class="sl" stroke-width="2" d="M9 1H5a3.500 3.500 0 0 0-3 5"/><path class="fl" d="M3 8l5-3v7zM8 7h1v2H8z"/></svg></button>
</div>
<div class="rule flex-shrink-0"></div>
<footer class="row-status d-flex align-items-center flex-shrink-0">
  <span class="grip align-self-stretch"></span>
  <svg width="16" height="16" class="me-2"><circle cx="8" cy="8" r="8" fill="#8bbf3c"/><text x="8" y="13" text-anchor="middle" font-size="13" font-weight="700" fill="#333">?</text></svg>
  <span class="mini help">Select Tool: select an object</span>
  <svg width="5" height="12" class="align-self-end mb-1"><path stroke="#222" stroke-width="1.500" d="M0 0l5 4M0 4l5 4M0 8l5 4"/></svg>
  <span class="vline align-self-stretch ms-1"></span>
  <span class="grip align-self-stretch"></span>
  <label for="mel" class="mel-cap text-white">MEL</label>
  <input id="mel" class="mel mel-in">
  <svg width="8" height="8"><path fill="#888" d="M4 0h1v1H4zM4 3h1v1H4zM4 6h1v1H4z"/></svg>
  <input class="mel flex-grow-1" readonly aria-label="Result">
  <button class="mx-1 px-1" aria-label="Script editor"><svg width="18" height="19"><path class="fl" d="M0 0h18v3H0zM0 4h18v15H0z"/><path class="fd" d="M1 1h1v1H1zM3 1h1v1H3zM5 1h1v1H5z"/><text x="9" y="15" text-anchor="middle" font-size="11" font-weight="700" class="fd">{;}</text></svg></button>
</footer>
<script src="https://cdn.jsdelivr.net/npm/bootstrap@5.3.0/dist/js/bootstrap.bundle.min.js"></script>
</body>
</html>
